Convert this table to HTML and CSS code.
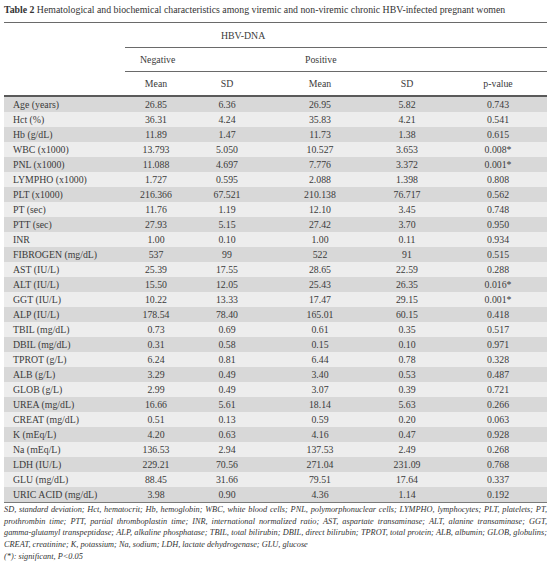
FILE: index.html
```html
<!DOCTYPE html>
<html lang="en">
<head>
<meta charset="utf-8">
<title>Table 2</title>
<link rel="stylesheet" href="styles.css">
</head>
<body>
<div class="page">
  <div class="caption"><b>Table 2</b> Hematological and biochemical characteristics among viremic and non-viremic chronic HBV-infected pregnant women</div>
  <table class="data">
    <colgroup>
      <col class="c-label"><col class="c1"><col class="c2"><col class="c3"><col class="c4"><col class="c5">
    </colgroup>
    <thead>
      <tr class="h1"><th></th><th colspan="5" class="hbv">HBV-DNA</th></tr>
      <tr class="h2"><th class="nb"></th><th colspan="2" class="neg">Negative</th><th colspan="3" class="pos">Positive</th></tr>
      <tr class="h3"><th></th><th>Mean</th><th>SD</th><th>Mean</th><th>SD</th><th class="pv">p-value</th></tr>
    </thead>
    <tbody>
      <tr><td>Age (years)</td><td>26.85</td><td>6.36</td><td>26.95</td><td>5.82</td><td class="pv">0.743</td></tr>
      <tr><td>Hct (%)</td><td>36.31</td><td>4.24</td><td>35.83</td><td>4.21</td><td class="pv">0.541</td></tr>
      <tr><td>Hb (g/dL)</td><td>11.89</td><td>1.47</td><td>11.73</td><td>1.38</td><td class="pv">0.615</td></tr>
      <tr><td>WBC (x1000)</td><td>13.793</td><td>5.050</td><td>10.527</td><td>3.653</td><td class="pv">0.008*</td></tr>
      <tr><td>PNL (x1000)</td><td>11.088</td><td>4.697</td><td>7.776</td><td>3.372</td><td class="pv">0.001*</td></tr>
      <tr><td>LYMPHO (x1000)</td><td>1.727</td><td>0.595</td><td>2.088</td><td>1.398</td><td class="pv">0.808</td></tr>
      <tr><td>PLT (x1000)</td><td>216.366</td><td>67.521</td><td>210.138</td><td>76.717</td><td class="pv">0.562</td></tr>
      <tr><td>PT (sec)</td><td>11.76</td><td>1.19</td><td>12.10</td><td>3.45</td><td class="pv">0.748</td></tr>
      <tr><td>PTT (sec)</td><td>27.93</td><td>5.15</td><td>27.42</td><td>3.70</td><td class="pv">0.950</td></tr>
      <tr><td>INR</td><td>1.00</td><td>0.10</td><td>1.00</td><td>0.11</td><td class="pv">0.934</td></tr>
      <tr><td>FIBROGEN (mg/dL)</td><td>537</td><td>99</td><td>522</td><td>91</td><td class="pv">0.515</td></tr>
      <tr><td>AST (IU/L)</td><td>25.39</td><td>17.55</td><td>28.65</td><td>22.59</td><td class="pv">0.288</td></tr>
      <tr><td>ALT (IU/L)</td><td>15.50</td><td>12.05</td><td>25.43</td><td>26.35</td><td class="pv">0.016*</td></tr>
      <tr><td>GGT (IU/L)</td><td>10.22</td><td>13.33</td><td>17.47</td><td>29.15</td><td class="pv">0.001*</td></tr>
      <tr><td>ALP (IU/L)</td><td>178.54</td><td>78.40</td><td>165.01</td><td>60.15</td><td class="pv">0.418</td></tr>
      <tr><td>TBIL (mg/dL)</td><td>0.73</td><td>0.69</td><td>0.61</td><td>0.35</td><td class="pv">0.517</td></tr>
      <tr><td>DBIL (mg/dL)</td><td>0.31</td><td>0.58</td><td>0.15</td><td>0.10</td><td class="pv">0.971</td></tr>
      <tr><td>TPROT (g/L)</td><td>6.24</td><td>0.81</td><td>6.44</td><td>0.78</td><td class="pv">0.328</td></tr>
      <tr><td>ALB (g/L)</td><td>3.29</td><td>0.49</td><td>3.40</td><td>0.53</td><td class="pv">0.487</td></tr>
      <tr><td>GLOB (g/L)</td><td>2.99</td><td>0.49</td><td>3.07</td><td>0.39</td><td class="pv">0.721</td></tr>
      <tr><td>UREA (mg/dL)</td><td>16.66</td><td>5.61</td><td>18.14</td><td>5.63</td><td class="pv">0.266</td></tr>
      <tr><td>CREAT (mg/dL)</td><td>0.51</td><td>0.13</td><td>0.59</td><td>0.20</td><td class="pv">0.063</td></tr>
      <tr><td>K (mEq/L)</td><td>4.20</td><td>0.63</td><td>4.16</td><td>0.47</td><td class="pv">0.928</td></tr>
      <tr><td>Na (mEq/L)</td><td>136.53</td><td>2.94</td><td>137.53</td><td>2.49</td><td class="pv">0.268</td></tr>
      <tr><td>LDH (IU/L)</td><td>229.21</td><td>70.56</td><td>271.04</td><td>231.09</td><td class="pv">0.768</td></tr>
      <tr><td>GLU (mg/dL)</td><td>88.45</td><td>31.66</td><td>79.51</td><td>17.64</td><td class="pv">0.337</td></tr>
      <tr><td>URIC ACID (mg/dL)</td><td>3.98</td><td>0.90</td><td>4.36</td><td>1.14</td><td class="pv">0.192</td></tr>
    </tbody>
  </table>
  <div class="notes">
    <span class="jl">SD, standard deviation; Hct, hematocrit; Hb, hemoglobin; WBC, white blood cells; PNL, polymorphonuclear cells; LYMPHO, lymphocytes; PLT, platelets; PT,</span>
    <span class="jl">prothrombin time; PTT, partial thromboplastin time; INR, international normalized ratio; AST, aspartate transaminase; ALT, alanine transaminase; GGT,</span>
    <span class="jl">gamma-glutamyl transpeptidase; ALP, alkaline phosphatase; TBIL, total bilirubin; DBIL, direct bilirubin; TPROT, total protein; ALB, albumin; GLOB, globulins;</span>
    <span class="ln">CREAT, creatinine; K, potassium; Na, sodium; LDH, lactate dehydrogenase; GLU, glucose</span>
    <span class="ln sig">(*): significant, P&lt;0.05</span>
  </div>
</div>
</body>
</html>
```

FILE: styles.css
```css
html, body {
  margin: 0;
  padding: 0;
  background: #ffffff;
}

.page {
  width: 543px;
  padding: 3px 0 0 4px;
  font-family: "Liberation Serif", "Times New Roman", serif;
  color: #3a3a3a;
}

.caption {
  font-size: 9.8px;
  line-height: 14px;
  height: 19px;
  white-space: nowrap;
  border-bottom: 1px solid #6a6a6a;
  color: #333;
}

.caption b {
  font-weight: bold;
}

.data {
  width: 543px;
  border-collapse: collapse;
  table-layout: fixed;
  font-size: 9.8px;
}

.c-label { width: 121px; }
.c1 { width: 62px; }
.c2 { width: 80px; }
.c3 { width: 106px; }
.c4 { width: 68px; }
.c5 { width: 106px; }

.data th {
  font-weight: normal;
  padding: 0;
  text-align: center;
}

.h1 th { height: 24px; }
.h1 .hbv {
  text-align: left;
  padding-left: 96px;
  border-bottom: 1px solid #6a6a6a;
}

.h2 th { height: 23px; }
.h2 .neg,
.h2 .pos {
  text-align: left;
  border-bottom: 1px solid #6a6a6a;
}
.h2 .neg { padding-left: 15px; }
.h2 .pos { padding-left: 38px; }

.h3 th {
  height: 23px;
  border-bottom: 2px solid #5a5a5a;
}

.data td {
  height: 15px;
  padding: 0;
  text-align: center;
  white-space: nowrap;
  line-height: 15px;
}

.data td:first-child {
  text-align: left;
  padding-left: 9px;
}

.data .pv {
  padding-left: 8px;
}

.data tbody tr:nth-child(odd) { background: #d8d8d8; }
.data tbody tr:nth-child(even) { background: #ededed; }

.data tbody tr:last-child td {
  border-bottom: 1px solid #7a7a7a;
}

.notes {
  padding-top: 1px;
  font-size: 8.3px;
  line-height: 11.5px;
  font-style: italic;
  color: #333;
}

.notes .jl {
  display: block;
  text-align: justify;
  text-align-last: justify;
  white-space: nowrap;
}

.notes .ln {
  display: block;
}

.notes .sig {
  margin-top: 2px;
  line-height: 10px;
}
```
